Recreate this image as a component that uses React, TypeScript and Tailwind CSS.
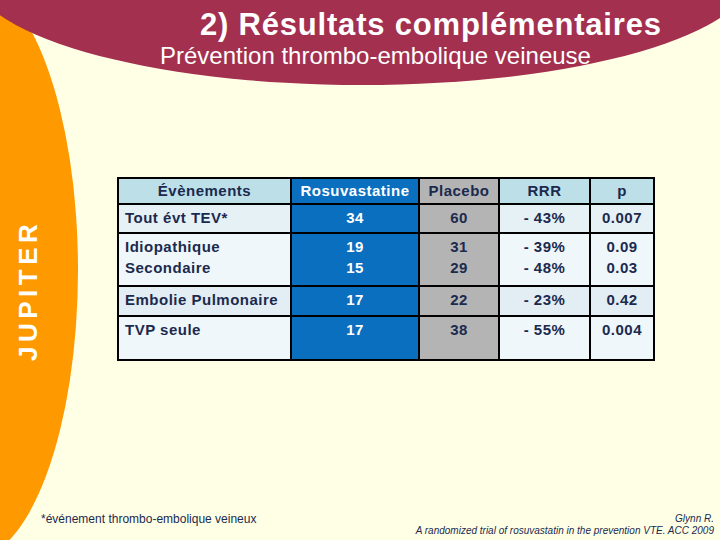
import React from 'react';

const font = { fontFamily: '"Liberation Sans", Arial, sans-serif' };

type Row = {
  label: string[];
  rosu: string[];
  placebo: string[];
  rrr: string[];
  p: string[];
  h: string;
  bg: string;
};

const rows: Row[] = [
  { label: ['Tout évt TEV*'], rosu: ['34'], placebo: ['60'], rrr: ['- 43%'], p: ['0.007'], h: 'h-[27px]', bg: 'bg-[#e6f1f6]' },
  { label: ['Idiopathique', 'Secondaire'], rosu: ['19', '15'], placebo: ['31', '29'], rrr: ['- 39%', '- 48%'], p: ['0.09', '0.03'], h: 'h-[51px]', bg: 'bg-[#eff7fb]' },
  { label: ['Embolie Pulmonaire'], rosu: ['17'], placebo: ['22'], rrr: ['- 23%'], p: ['0.42'], h: 'h-[28px]', bg: 'bg-[#e2eef4]' },
  { label: ['TVP seule'], rosu: ['17'], placebo: ['38'], rrr: ['- 55%'], p: ['0.004'], h: 'h-[42px]', bg: 'bg-[#eff7fb]' },
];

const Lines = ({ items }: { items: string[] }) => (
  <>
    {items.map((t) => (
      <div key={t}>{t}</div>
    ))}
  </>
);

const ResultsTable = () => {
  const cell = 'pt-[2px] leading-[21px]';
  return (
    <div className="grid grid-cols-[171px_126px_78px_89px_62px] gap-[2px] bg-black p-[2px] text-[15px] font-bold tracking-[0.5px] text-[#1b2a4e]">
      <div className="h-[24px] bg-[#bcdfe8] flex items-center justify-center">Évènements</div>
      <div className="h-[24px] bg-[#0a6fbf] text-white flex items-center justify-center">Rosuvastatine</div>
      <div className="h-[24px] bg-[#b4b4b4] flex items-center justify-center">Placebo</div>
      <div className="h-[24px] bg-[#bcdfe8] flex items-center justify-center">RRR</div>
      <div className="h-[24px] bg-[#bcdfe8] flex items-center justify-center">p</div>
      {rows.map((r) => (
        <React.Fragment key={r.label[0]}>
          <div className={`${r.h} ${r.bg} ${cell} pl-[6px]`}>
            <Lines items={r.label} />
          </div>
          <div className={`${r.h} bg-[#0a6fbf] text-white text-center ${cell}`}>
            <Lines items={r.rosu} />
          </div>
          <div className={`${r.h} bg-[#b4b4b4] text-center ${cell}`}>
            <Lines items={r.placebo} />
          </div>
          <div className={`${r.h} ${r.bg} text-center ${cell}`}>
            <Lines items={r.rrr} />
          </div>
          <div className={`${r.h} ${r.bg} text-center ${cell}`}>
            <Lines items={r.p} />
          </div>
        </React.Fragment>
      ))}
    </div>
  );
};

export default function App() {
  return (
    <div className="relative w-[720px] h-[540px] overflow-hidden bg-[#ffffe6]" style={font}>
      <svg className="absolute inset-0" width="720" height="540" viewBox="0 0 720 540">
        <ellipse cx="-30" cy="270" rx="108" ry="290" fill="#ff9900" />
        <ellipse cx="362" cy="-28" rx="392" ry="113" fill="#a3304f" />
      </svg>

      <div className="relative flex flex-col h-full">
        <div className="pl-[200px] pt-[8px] text-[31px] leading-[34px] font-bold tracking-[0.8px] text-white">
          2) Résultats complémentaires
        </div>
        <div className="pl-[160px] text-[24px] leading-[28px] text-white">
          Prévention thrombo-embolique veineuse
        </div>

        <div className="flex mt-[107px]">
          <div className="w-[117px] flex pl-[15px] pt-[34px]">
            <span className="[writing-mode:vertical-rl] rotate-180 text-[26px] leading-[26px] font-bold tracking-[4.5px] text-white">
              JUPITER
            </span>
          </div>
          <ResultsTable />
        </div>

        <div className="mt-auto flex justify-between items-end pl-[41px] pr-[6px] pb-[3px]">
          <div className="text-[12px] leading-[14px] text-[#1b2a4e] pb-[11px]">
            *événement thrombo-embolique veineux
          </div>
          <div className="text-right italic text-[10px] leading-[12px] text-[#1b2a4e]">
            <div>Glynn R.</div>
            <div>A randomized trial of rosuvastatin in the prevention VTE. ACC 2009</div>
          </div>
        </div>
      </div>
    </div>
  );
}
